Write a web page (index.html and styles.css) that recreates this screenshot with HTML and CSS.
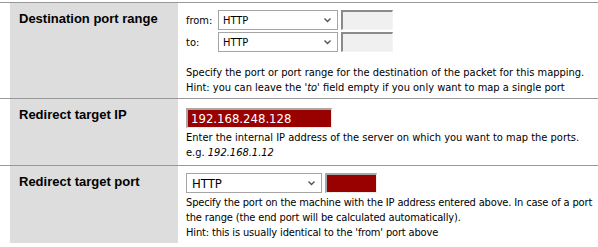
FILE: index.html
```html
<!DOCTYPE html>
<html lang="en">
  <head>
    <meta charset="UTF-8" />
    <meta name="viewport" content="width=device-width, initial-scale=1.0" />
    <title>Firewall: NAT: Port Forward: Edit</title>
    <link rel="stylesheet" href="styles.css">
  </head>
  <body>
    <main class="form">
      <div class="row">
        <div class="label">Destination port range</div>
        <div class="field">
          <div class="range">
            <div class="range-row">
              <span class="range-label">from:</span>
              <span class="select wide">HTTP
                <svg class="arrow" width="7" height="5" viewBox="0 0 7 5"><path d="M0.5 0.5 L3.5 3.5 L6.5 0.5" fill="none" stroke="#555" stroke-width="1.4"/></svg>
              </span>
              <input class="port off" type="text" disabled>
            </div>
            <div class="range-row">
              <span class="range-label">to:</span>
              <span class="select wide">HTTP
                <svg class="arrow" width="7" height="5" viewBox="0 0 7 5"><path d="M0.5 0.5 L3.5 3.5 L6.5 0.5" fill="none" stroke="#555" stroke-width="1.4"/></svg>
              </span>
              <input class="port off" type="text" disabled>
            </div>
          </div>
          <p class="expl gap">Specify the port or port range for the destination of the packet for this mapping.<br>
            Hint: you can leave the <em>'to'</em> field empty if you only want to map a single port</p>
        </div>
      </div>

      <div class="row">
        <div class="label">Redirect target IP</div>
        <div class="field ip-field">
          <input class="ip bad" type="text" value="192.168.248.128">
          <p class="expl">Enter the internal IP address of the server on which you want to map the ports.<br>
            e.g. <em>192.168.1.12</em></p>
        </div>
      </div>

      <div class="row">
        <div class="label">Redirect target port</div>
        <div class="field">
          <div class="controls">
            <span class="select big">HTTP
              <svg class="arrow" width="7" height="5" viewBox="0 0 7 5"><path d="M0.5 0.5 L3.5 3.5 L6.5 0.5" fill="none" stroke="#555" stroke-width="1.4"/></svg>
            </span>
            <input class="port bad" type="text">
          </div>
          <p class="expl tight">Specify the port on the machine with the IP address entered above. In case of a port<br>
            the range (the end port will be calculated automatically).<br>
            Hint: this is usually identical to the 'from' port above</p>
        </div>
      </div>
    </main>
  </body>
</html>
```

FILE: styles.css
```css
body {
  margin: 0;
  background-color: #fff;
  font-family: Tahoma, "DejaVu Sans Condensed", "Liberation Sans", sans-serif;
  font-size: 11px;
  color: #000;
}
.form {
  padding-top: 2px;
}
.row {
  display: flex;
  padding-left: 10px;
  border-top: 1px solid #999;
}
.label {
  width: 168px;
  flex-shrink: 0;
  box-sizing: border-box;
  padding: 8px 9px;
  background-color: #ddd;
  font-family: "Liberation Sans", Arial, sans-serif;
  font-size: 13px;
  font-weight: bold;
  white-space: nowrap;
}
.field {
  flex: 1;
  min-width: 0;
  padding: 7px 0 3px 8px;
  line-height: 15px;
}
.ip-field {
  padding-top: 9px;
  padding-bottom: 5px;
}
.range-row {
  display: flex;
  align-items: center;
  height: 20px;
  margin-bottom: 2px;
}
.range-label {
  width: 32px;
}
.controls {
  display: flex;
  align-items: center;
}
.select {
  display: inline-flex;
  align-items: center;
  justify-content: space-between;
  box-sizing: border-box;
  height: 20px;
  padding: 0 6px 0 4px;
  border: 1px solid #a5a5a5;
  background-color: #fff;
}
.select.wide {
  width: 120px;
}
.select.big {
  width: 136px;
  font-size: 13px;
  padding-left: 5px;
}
.port,
.ip {
  display: block;
  box-sizing: border-box;
  height: 20px;
  margin: 0 0 0 3px;
  padding: 0 3px;
  border-style: solid;
  border-width: 2px 1px 1px 2px;
  border-color: #8a8a8a #f4f4f4 #f4f4f4 #8a8a8a;
  font-family: inherit;
}
.port {
  width: 52px;
}
.off {
  background-color: #f0f0f0;
}
.bad {
  background-color: #990000;
  color: #fff;
  border-color: #a8a8a8 #ececec #ececec #a8a8a8;
}
.ip {
  width: 146px;
  margin-left: 0;
  font-size: 13px;
}
.expl {
  margin: 2px 0 0 0;
  white-space: nowrap;
}
.expl.gap {
  margin-top: 13px;
}
.expl.tight {
  letter-spacing: -0.15px;
}
```
